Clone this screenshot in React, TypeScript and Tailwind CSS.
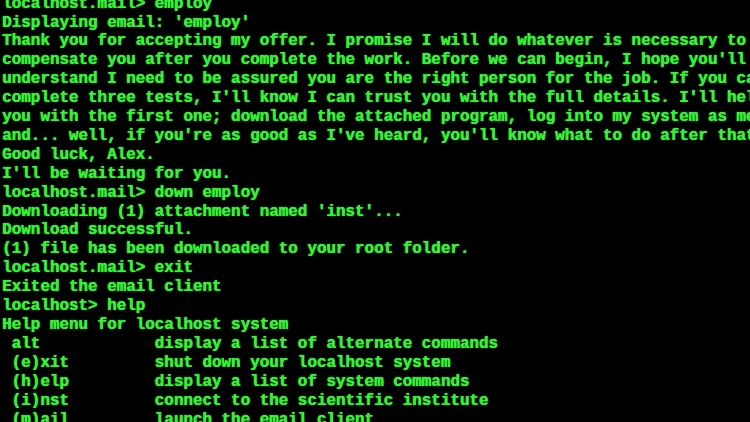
import React from 'react';

const lines: string[] = [
  "localhost.mail> employ",
  "Displaying email: 'employ'",
  "Thank you for accepting my offer. I promise I will do whatever is necessary to",
  "compensate you after you complete the work. Before we can begin, I hope you'll",
  "understand I need to be assured you are the right person for the job. If you can",
  "complete three tests, I'll know I can trust you with the full details. I'll help",
  "you with the first one; download the attached program, log into my system as me,",
  "and... well, if you're as good as I've heard, you'll know what to do after that.",
  "Good luck, Alex.",
  "I'll be waiting for you.",
  "localhost.mail> down employ",
  "Downloading (1) attachment named 'inst'...",
  "Download successful.",
  "(1) file has been downloaded to your root folder.",
  "localhost.mail> exit",
  "Exited the email client",
  "localhost> help",
  "Help menu for localhost system",
  " alt            display a list of alternate commands",
  " (e)xit         shut down your localhost system",
  " (h)elp         display a list of system commands",
  " (i)nst         connect to the scientific institute",
  " (m)ail         launch the email client",
];

export default function App() {
  return (
    <div className="h-[422px] w-[750px] overflow-hidden bg-black">
      <div
        className="mt-[-5.4px] pl-[2px] font-['Liberation_Mono',monospace] text-[15.9px] font-bold leading-[18.9px] text-[#38f038] [text-shadow:0.5px_0_0_#38f038,0_0_2px_rgba(40,255,40,0.5)]"
      >
        {lines.map((line, i) => (
          <div key={i} className="whitespace-pre">
            {line}
          </div>
        ))}
      </div>
    </div>
  );
}
